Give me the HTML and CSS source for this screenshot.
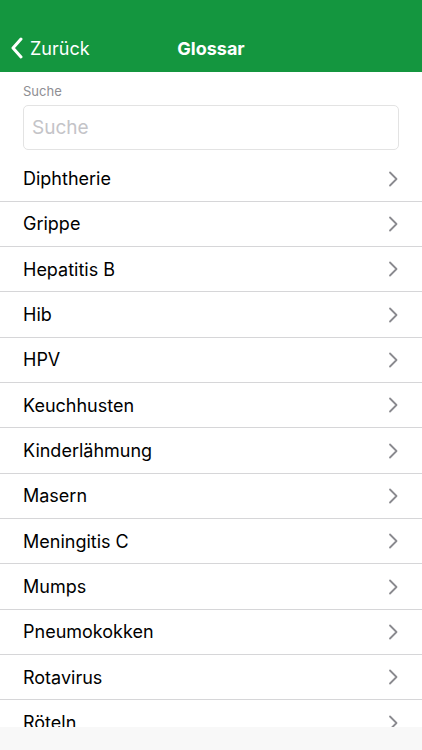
FILE: index.html
```html
<!DOCTYPE html>
<html lang="de">
<head>
<meta charset="utf-8">
<title>Glossar</title>
<link rel="stylesheet" href="styles.css">
</head>
<body>
<div class="app">
  <header class="navbar">
    <div class="back">
      <svg class="back-icon" width="14" height="22" viewBox="0 0 14 22"><path d="M11 2 L3 11 L11 20" fill="none" stroke="#fff" stroke-width="3" stroke-linecap="round" stroke-linejoin="round"/></svg>
      <span>Zurück</span>
    </div>
    <h1 class="title">Glossar</h1>
  </header>
  <div class="search">
    <label class="search-label" for="q">Suche</label>
    <input class="search-input" id="q" type="text" placeholder="Suche">
  </div>
  <ul class="list">
    <li class="row"><span>Diphtherie</span><svg class="chev" width="10" height="16" viewBox="0 0 10 16"><path d="M2 1.5 L8.5 8 L2 14.5" fill="none" stroke="#8a8a8f" stroke-width="1.8" stroke-linecap="round" stroke-linejoin="round"/></svg></li>
    <li class="row"><span>Grippe</span><svg class="chev" width="10" height="16" viewBox="0 0 10 16"><path d="M2 1.5 L8.5 8 L2 14.5" fill="none" stroke="#8a8a8f" stroke-width="1.8" stroke-linecap="round" stroke-linejoin="round"/></svg></li>
    <li class="row"><span>Hepatitis B</span><svg class="chev" width="10" height="16" viewBox="0 0 10 16"><path d="M2 1.5 L8.5 8 L2 14.5" fill="none" stroke="#8a8a8f" stroke-width="1.8" stroke-linecap="round" stroke-linejoin="round"/></svg></li>
    <li class="row"><span>Hib</span><svg class="chev" width="10" height="16" viewBox="0 0 10 16"><path d="M2 1.5 L8.5 8 L2 14.5" fill="none" stroke="#8a8a8f" stroke-width="1.8" stroke-linecap="round" stroke-linejoin="round"/></svg></li>
    <li class="row"><span>HPV</span><svg class="chev" width="10" height="16" viewBox="0 0 10 16"><path d="M2 1.5 L8.5 8 L2 14.5" fill="none" stroke="#8a8a8f" stroke-width="1.8" stroke-linecap="round" stroke-linejoin="round"/></svg></li>
    <li class="row"><span>Keuchhusten</span><svg class="chev" width="10" height="16" viewBox="0 0 10 16"><path d="M2 1.5 L8.5 8 L2 14.5" fill="none" stroke="#8a8a8f" stroke-width="1.8" stroke-linecap="round" stroke-linejoin="round"/></svg></li>
    <li class="row"><span>Kinderlähmung</span><svg class="chev" width="10" height="16" viewBox="0 0 10 16"><path d="M2 1.5 L8.5 8 L2 14.5" fill="none" stroke="#8a8a8f" stroke-width="1.8" stroke-linecap="round" stroke-linejoin="round"/></svg></li>
    <li class="row"><span>Masern</span><svg class="chev" width="10" height="16" viewBox="0 0 10 16"><path d="M2 1.5 L8.5 8 L2 14.5" fill="none" stroke="#8a8a8f" stroke-width="1.8" stroke-linecap="round" stroke-linejoin="round"/></svg></li>
    <li class="row"><span>Meningitis C</span><svg class="chev" width="10" height="16" viewBox="0 0 10 16"><path d="M2 1.5 L8.5 8 L2 14.5" fill="none" stroke="#8a8a8f" stroke-width="1.8" stroke-linecap="round" stroke-linejoin="round"/></svg></li>
    <li class="row"><span>Mumps</span><svg class="chev" width="10" height="16" viewBox="0 0 10 16"><path d="M2 1.5 L8.5 8 L2 14.5" fill="none" stroke="#8a8a8f" stroke-width="1.8" stroke-linecap="round" stroke-linejoin="round"/></svg></li>
    <li class="row"><span>Pneumokokken</span><svg class="chev" width="10" height="16" viewBox="0 0 10 16"><path d="M2 1.5 L8.5 8 L2 14.5" fill="none" stroke="#8a8a8f" stroke-width="1.8" stroke-linecap="round" stroke-linejoin="round"/></svg></li>
    <li class="row"><span>Rotavirus</span><svg class="chev" width="10" height="16" viewBox="0 0 10 16"><path d="M2 1.5 L8.5 8 L2 14.5" fill="none" stroke="#8a8a8f" stroke-width="1.8" stroke-linecap="round" stroke-linejoin="round"/></svg></li>
    <li class="row"><span>Röteln</span><svg class="chev" width="10" height="16" viewBox="0 0 10 16"><path d="M2 1.5 L8.5 8 L2 14.5" fill="none" stroke="#8a8a8f" stroke-width="1.8" stroke-linecap="round" stroke-linejoin="round"/></svg></li>
  </ul>
  <div class="bottom-bar"></div>
</div>
</body>
</html>
```
FILE: styles.css
```css
* { box-sizing: border-box; }
html, body {
  margin: 0;
  padding: 0;
  background: #fff;
  font-family: Inter, "Liberation Sans", Arial, sans-serif;
  color: #000;
}
.app {
  width: 422px;
  height: 750px;
  overflow: hidden;
  position: relative;
}
.navbar {
  height: 72px;
  background: #14963f;
  display: flex;
  align-items: center;
  padding-top: 24px;
  position: relative;
  color: #fff;
}
.back {
  display: flex;
  align-items: center;
  gap: 6px;
  padding-left: 10px;
  font-size: 18px;
}
.back-icon { display: block; }
.title {
  position: absolute;
  left: 0;
  right: 0;
  top: 24px;
  bottom: 0;
  margin: 0;
  display: flex;
  align-items: center;
  justify-content: center;
  font-size: 18px;
  font-weight: 700;
  pointer-events: none;
}
.search {
  padding: 11px 23px 0 23px;
  display: flex;
  flex-direction: column;
}
.search-label {
  font-size: 13px;
  color: #8e8e93;
  line-height: 16px;
}
.search-input {
  margin-top: 6px;
  height: 45px;
  border: 1px solid #e3e3e3;
  border-radius: 5px;
  padding: 0 8px;
  font-family: inherit;
  font-size: 19px;
  outline: none;
}
.search-input::placeholder { color: #c4c4c8; }
.list {
  list-style: none;
  margin: 6.5px 0 0 0;
  padding: 0;
}
.row {
  height: 45.33px;
  border-bottom: 1.5px solid #d6d6d8;
  display: flex;
  align-items: center;
  justify-content: space-between;
  padding: 0 24px 0 23px;
  font-size: 18px;
}
.chev { display: block; }
.bottom-bar {
  position: absolute;
  left: 0;
  right: 0;
  bottom: 0;
  height: 23px;
  background: #f8f8f8;
}
```
